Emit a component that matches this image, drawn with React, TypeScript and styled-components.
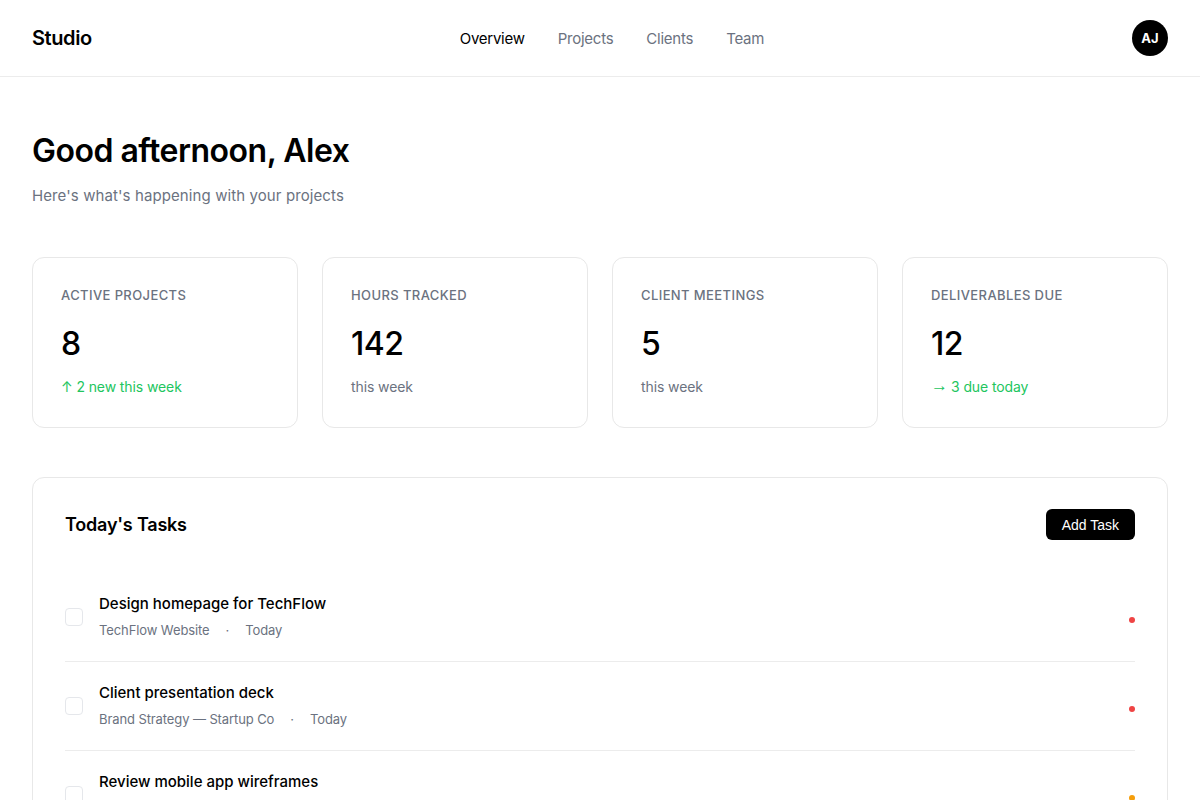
import React from "react";
import styled, { createGlobalStyle } from "styled-components";

const Global = createGlobalStyle`
  * { box-sizing: border-box; }
  html, body { margin: 0; padding: 0; background: #fff; }
  body { font-family: Inter, "Noto Sans", sans-serif; color: #000; }
`;

const Header = styled.header`
  height: 77px;
  border-bottom: 1px solid #ececec;
  padding: 0 32px;
  display: flex;
  align-items: center;
  justify-content: space-between;
`;

const Logo = styled.div`
  font-size: 20px;
  font-weight: 600;
  letter-spacing: -0.4px;
`;

const Nav = styled.nav`
  display: flex;
  gap: 33px;
`;

const NavLink = styled.a<{ $active?: boolean }>`
  font-size: 15px;
  letter-spacing: -0.25px;
  color: ${(p) => (p.$active ? "#000" : "#6b7280")};
  text-decoration: none;
  font-weight: 400;
`;

const Avatar = styled.div`
  width: 36px;
  height: 36px;
  border-radius: 50%;
  background: #000;
  color: #fff;
  font-size: 13px;
  font-weight: 700;
  display: flex;
  align-items: center;
  justify-content: center;
`;

const Main = styled.main`
  padding: 54px 32px 0;
`;

const Title = styled.h1`
  margin: 0;
  font-size: 32px;
  line-height: 40px;
  font-weight: 600;
  letter-spacing: -0.5px;
`;

const Subtitle = styled.p`
  margin: 13px 0 0;
  font-size: 15px;
  line-height: 24px;
  letter-spacing: 0.1px;
  color: #6b7280;
`;

const Stats = styled.div`
  margin-top: 49px;
  display: grid;
  grid-template-columns: repeat(4, 1fr);
  gap: 24px;
`;

const Card = styled.div`
  border: 1px solid #e8e8e8;
  border-radius: 12px;
  padding: 28px;
  height: 171px;
`;

const CardLabel = styled.div`
  font-size: 13px;
  line-height: 18px;
  color: #6b7280;
  text-transform: uppercase;
  letter-spacing: 0.4px;
  font-weight: 500;
`;

const CardValue = styled.div`
  margin-top: 21px;
  font-size: 32px;
  line-height: 38px;
  font-weight: 500;
  letter-spacing: -0.5px;
`;

const CardSub = styled.div<{ $accent?: boolean }>`
  margin-top: 14px;
  font-size: 14px;
  line-height: 20px;
  letter-spacing: -0.1px;
  color: ${(p) => (p.$accent ? "#22c55e" : "#6b7280")};
`;

const Arrow = styled.span`
  font-family: "Liberation Sans", Arial, sans-serif;
  font-size: 17px;
  line-height: 0;
  letter-spacing: 0;
  position: relative;
  top: -1px;
  margin-right: 3px;
`;

const Panel = styled.section`
  margin-top: 49px;
  border: 1px solid #e8e8e8;
  border-radius: 12px;
  padding: 31px 32px 0;
`;

const PanelHead = styled.div`
  display: flex;
  align-items: center;
  justify-content: space-between;
  height: 31px;
  margin-bottom: 33px;
`;

const PanelTitle = styled.h2`
  margin: 0;
  font-size: 18px;
  font-weight: 600;
  letter-spacing: -0.2px;
`;

const Button = styled.button`
  height: 31px;
  padding: 0 16px;
  border: none;
  border-radius: 6px;
  background: #000;
  color: #fff;
  font-family: "Liberation Sans", Arial, sans-serif;
  font-size: 14px;
`;

const Row = styled.div`
  display: flex;
  align-items: center;
  gap: 16px;
  padding: 20px 0 21px;
  border-bottom: 1px solid #ececec;
`;

const Check = styled.span`
  width: 18px;
  height: 18px;
  border: 1.5px solid #e5e7eb;
  border-radius: 4px;
  flex-shrink: 0;
`;

const RowBody = styled.div`
  flex: 1;
`;

const RowTitle = styled.div`
  font-size: 15px;
  line-height: 22px;
  font-weight: 500;
`;

const Meta = styled.div`
  margin-top: 5px;
  display: flex;
  gap: 16px;
  font-size: 13px;
  line-height: 20px;
  letter-spacing: -0.1px;
  color: #6b7280;
`;

const Dot = styled.span<{ $color: string }>`
  width: 6px;
  height: 6px;
  border-radius: 50%;
  background: ${(p) => p.$color};
  margin-top: 6px;
  flex-shrink: 0;
`;

const stats = [
  { label: "Active Projects", value: "8", arrow: "↑", sub: "2 new this week", accent: true },
  { label: "Hours Tracked", value: "142", sub: "this week" },
  { label: "Client Meetings", value: "5", sub: "this week" },
  { label: "Deliverables Due", value: "12", arrow: "→", sub: "3 due today", accent: true },
];

const tasks = [
  { title: "Design homepage for TechFlow", project: "TechFlow Website", due: "Today", color: "#ef4444" },
  { title: "Client presentation deck", project: "Brand Strategy — Startup Co", due: "Today", color: "#ef4444" },
  { title: "Review mobile app wireframes", project: "Mobile App — FinTech", due: "Tomorrow", color: "#f59e0b" },
];

export default function App() {
  return (
    <>
      <Global />
      <Header>
        <Logo>Studio</Logo>
        <Nav>
          <NavLink $active>Overview</NavLink>
          <NavLink>Projects</NavLink>
          <NavLink>Clients</NavLink>
          <NavLink>Team</NavLink>
        </Nav>
        <Avatar>AJ</Avatar>
      </Header>
      <Main>
        <Title>Good afternoon, Alex</Title>
        <Subtitle>Here's what's happening with your projects</Subtitle>
        <Stats>
          {stats.map((s) => (
            <Card key={s.label}>
              <CardLabel>{s.label}</CardLabel>
              <CardValue>{s.value}</CardValue>
              <CardSub $accent={s.accent}>
                {s.arrow === "→" ? <Arrow>→</Arrow> : s.arrow ? `${s.arrow} ` : ""}
                {s.sub}
              </CardSub>
            </Card>
          ))}
        </Stats>
        <Panel>
          <PanelHead>
            <PanelTitle>Today's Tasks</PanelTitle>
            <Button>Add Task</Button>
          </PanelHead>
          {tasks.map((t) => (
            <Row key={t.title}>
              <Check />
              <RowBody>
                <RowTitle>{t.title}</RowTitle>
                <Meta>
                  <span>{t.project}</span>
                  <span>·</span>
                  <span>{t.due}</span>
                </Meta>
              </RowBody>
              <Dot $color={t.color} />
            </Row>
          ))}
        </Panel>
      </Main>
    </>
  );
}
